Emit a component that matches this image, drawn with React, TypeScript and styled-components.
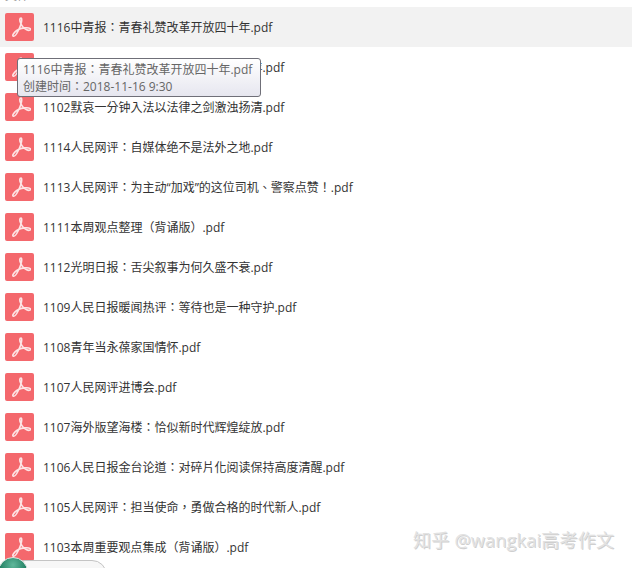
import React from "react";
import styled, { createGlobalStyle } from "styled-components";

const files = [
  "1116中青报：青春礼赞改革开放四十年.pdf",
  "1116中青报：青春礼赞改革开放四十周年.pdf",
  "1102默哀一分钟入法以法律之剑激浊扬清.pdf",
  "1114人民网评：自媒体绝不是法外之地.pdf",
  "1113人民网评：为主动“加戏”的这位司机、警察点赞！.pdf",
  "1111本周观点整理（背诵版）.pdf",
  "1112光明日报：舌尖叙事为何久盛不衰.pdf",
  "1109人民日报暖闻热评：等待也是一种守护.pdf",
  "1108青年当永葆家国情怀.pdf",
  "1107人民网评进博会.pdf",
  "1107海外版望海楼：恰似新时代辉煌绽放.pdf",
  "1106人民日报金台论道：对碎片化阅读保持高度清醒.pdf",
  "1105人民网评：担当使命，勇做合格的时代新人.pdf",
  "1103本周重要观点集成（背诵版）.pdf",
];

const GlobalStyle = createGlobalStyle`
  html, body {
    margin: 0;
    padding: 0;
    background: #fff;
  }
`;

const Page = styled.div`
  position: relative;
  width: 632px;
  height: 568px;
  overflow: hidden;
  background: #fff;
  font-family: "Open Sans", "Noto Sans CJK TC", sans-serif;
`;

const Heading = styled.div`
  height: 7px;
  padding-left: 5px;
  overflow: hidden;
  font-size: 12px;
  line-height: 12px;
  color: #999;

  span {
    display: block;
    margin-top: -10px;
  }
`;

const List = styled.div`
  display: flex;
  flex-direction: column;
`;

const Row = styled.div<{ $active?: boolean }>`
  display: flex;
  align-items: center;
  flex: none;
  gap: 9px;
  height: 40px;
  padding-left: 5px;
  background: ${(p) => (p.$active ? "#f2f2f2" : "#fff")};
`;

const FileName = styled.span`
  font-size: 12px;
  color: #333;
  white-space: nowrap;
`;

const IconBox = styled.div`
  display: flex;
  align-items: center;
  justify-content: center;
  flex: none;
  width: 29px;
  height: 28px;
  border-radius: 2px;
  background: #f4686d;
`;

const Tooltip = styled.div`
  position: absolute;
  left: 17px;
  top: 58px;
  width: 244px;
  height: 39px;
  padding: 2px 0 0 5px;
  box-sizing: border-box;
  border: 1px solid #6f6f78;
  border-radius: 3px;
  background: linear-gradient(#fff, #e6e6ef);
  font-size: 12px;
  line-height: 17px;
  color: #666;
  white-space: nowrap;
`;

const Watermark = styled.div`
  position: absolute;
  left: 413px;
  top: 527px;
  font-size: 18px;
  line-height: 26px;
  letter-spacing: 0.25px;
  color: #e2e2e2;
  text-shadow: 1px 1px 0 #cfcfcf;
  white-space: nowrap;
`;

const Pill = styled.div`
  position: absolute;
  left: 10px;
  top: 560px;
  width: 97px;
  height: 30px;
  box-sizing: border-box;
  border: 1px solid #c4c4c4;
  border-radius: 15px;
  background: #f7f7f7;
`;

const Badge = styled.div`
  position: absolute;
  left: -2px;
  top: 557px;
  width: 30px;
  height: 30px;
  border-radius: 50%;
  border: 1px solid #dfe8e4;
  box-sizing: border-box;
  background: radial-gradient(circle at 50% 25%, #5fb89b, #0f6f52 70%);
`;

function PdfIcon() {
  return (
    <svg width="22" height="22" viewBox="0 0 22 22" fill="none">
      <path
        transform="translate(1 0)"
        d="M11 2c-1.5 0 -1.6 2.2 -0.4 5c1.3 3 3.4 5.6 6 6.8c2 0.9 3.9 0.6 3.9 -0.6c0 -1.3 -2.8 -1.7 -6 -1.3c-3.6 0.4 -7.4 1.9 -9.7 4.2c-1.7 1.7 -2.6 3.6 -1.5 4.1c1.3 0.5 3.2 -2 4.8 -5.2c1.6 -3.2 3.6 -8.4 3.6 -11c0 -1.3 -0.2 -2 -0.7 -2z"
        stroke="#fde4e5"
        strokeWidth="1.6"
        strokeLinejoin="round"
      />
    </svg>
  );
}

export default function App() {
  return (
    <Page>
      <GlobalStyle />
      <Heading>
        <span>文件</span>
      </Heading>
      <List>
        {files.map((name, i) => (
          <Row key={i} $active={i === 0}>
            <IconBox>
              <PdfIcon />
            </IconBox>
            <FileName>{name}</FileName>
          </Row>
        ))}
      </List>
      <Tooltip>
        1116中青报：青春礼赞改革开放四十年.pdf
        <br />
        创建时间：2018-11-16 9:30
      </Tooltip>
      <Watermark>知乎 @wangkai高考作文</Watermark>
      <Pill />
      <Badge />
    </Page>
  );
}
